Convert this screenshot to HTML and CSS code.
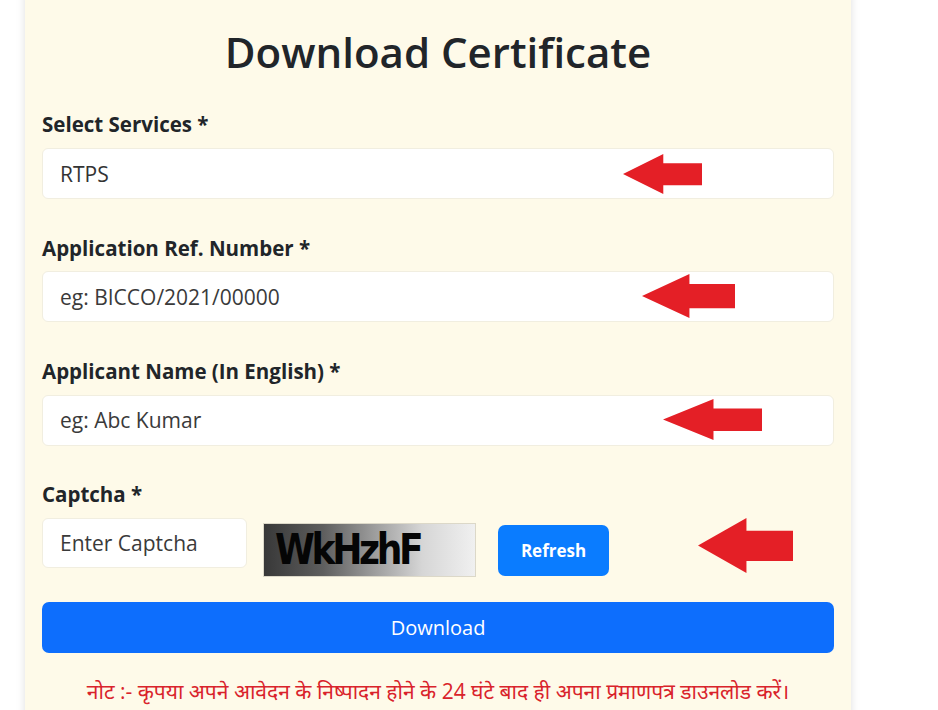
FILE: index.html
```html
<!DOCTYPE html>
<html lang="hi">
  <head>
    <meta charset="utf-8" />
    <meta name="viewport" content="width=device-width" />
    <title>Download Certificate</title>
    <link rel="stylesheet" href="styles.css">
  </head>

  <body>
    <section class="card">
      <h1 class="card-title">Download Certificate</h1>

      <form class="cert-form">
        <div class="field">
          <label for="service">Select Services *</label>
          <input id="service" class="form-control" type="text" value="RTPS" />
          <svg class="arrow arrow-1" viewBox="0 0 100 100" preserveAspectRatio="none"><polygon points="0,50 51,0 51,23 100,23 100,78 51,78 51,100" /></svg>
        </div>

        <div class="field">
          <label for="refno">Application Ref. Number *</label>
          <input id="refno" class="form-control" type="text" placeholder="eg: BICCO/2021/00000" />
          <svg class="arrow arrow-2" viewBox="0 0 100 100" preserveAspectRatio="none"><polygon points="0,50 51,0 51,23 100,23 100,78 51,78 51,100" /></svg>
        </div>

        <div class="field">
          <label for="appname">Applicant Name (In English) *</label>
          <input id="appname" class="form-control" type="text" placeholder="eg: Abc Kumar" />
          <svg class="arrow arrow-3" viewBox="0 0 100 100" preserveAspectRatio="none"><polygon points="0,50 51,0 51,23 100,23 100,78 51,78 51,100" /></svg>
        </div>

        <div class="field field-captcha">
          <label for="captcha">Captcha *</label>
          <div class="captcha-row">
            <input id="captcha" class="form-control captcha-input" type="text" placeholder="Enter Captcha" />
            <div class="captcha-img"><span>WkHzhF</span></div>
            <button type="button" class="btn btn-refresh">Refresh</button>
          </div>
          <svg class="arrow arrow-4" viewBox="0 0 100 100" preserveAspectRatio="none"><polygon points="0,50 51,0 51,23 100,23 100,78 51,78 51,100" /></svg>
        </div>

        <button type="submit" class="btn btn-download">Download</button>

        <p class="note">नोट :- कृपया अपने आवेदन के निष्पादन होने के 24 घंटे बाद ही अपना प्रमाणपत्र डाउनलोड करें।</p>
      </form>
    </section>
  </body>
</html>
```

FILE: styles.css
```css
html {
  box-sizing: border-box;
}

* {
  box-sizing: inherit;
}

body {
  margin: 0;
  background-color: #fff;
  color: #212529;
  font-family: "Open Sans", "Noto Sans", sans-serif;
}

.card {
  width: 826px;
  margin: -12px 0 0 25px;
  padding: 39px 17px 20px;
  background-color: #fefae9;
  border-radius: 8px;
  box-shadow: 0 0 10px rgba(0, 0, 0, 0.13);
}

.card-title {
  margin: 0 0 32px;
  font-size: 42px;
  font-weight: 600;
  line-height: 1.2;
  text-align: center;
}

.field {
  position: relative;
  margin-bottom: 33.5px;
}

.field label {
  display: block;
  margin-bottom: 8px;
  font-size: 20.5px;
  font-weight: 700;
  line-height: 1.5;
}

.form-control {
  display: block;
  width: 100%;
  height: 51px;
  padding: 0 17px;
  font: inherit;
  font-size: 21px;
  color: #333;
  background-color: #fff;
  border: 1px solid #f1eee0;
  border-radius: 6px;
  outline: none;
}

.form-control::placeholder {
  color: #3a3a3a;
}

/* captcha line: input, image, refresh */
.captcha-row {
  display: flex;
  align-items: flex-start;
  height: 59px;
}

.captcha-input {
  width: 205px;
  height: 50px;
}

.captcha-img {
  width: 213px;
  height: 54px;
  margin: 5px 0 0 16px;
  padding-left: 11px;
  overflow: hidden;
  border: 1px solid #dcd8c8;
  background: linear-gradient(to right, #383838, #5e5e5e 28%, #9c9c9c 52%, #d6d6d6 75%, #f0f0f0);
}

.captcha-img span {
  display: inline-block;
  font-family: "DejaVu Sans", sans-serif;
  font-size: 43px;
  font-weight: 700;
  line-height: 50px;
  letter-spacing: -4px;
  color: #050505;
  transform: scaleX(0.84);
  transform-origin: left center;
}

.btn {
  border: 0;
  border-radius: 7px;
  color: #fff;
  font-family: inherit;
  cursor: pointer;
}

.btn-refresh {
  width: 111px;
  height: 51px;
  margin: 7px 0 0 22px;
  background-color: #0a7cff;
  font-size: 17px;
  font-weight: 700;
}

.btn-download {
  display: block;
  width: 100%;
  height: 51px;
  margin-top: -8px;
  background-color: #0d6efd;
  font-size: 20px;
  font-weight: 400;
}

.note {
  margin: 24px 0 0;
  color: #d9232b;
  font-size: 21px;
  text-align: center;
}

/* red pointers over the inputs */
.arrow {
  position: absolute;
  fill: #e41f26;
}

.arrow-1 {
  left: 581px;
  top: 45px;
  width: 79px;
  height: 40px;
}

.arrow-2 {
  left: 600px;
  top: 41px;
  width: 93px;
  height: 44px;
}

.arrow-3 {
  left: 621px;
  top: 43px;
  width: 99px;
  height: 41px;
}

.arrow-4 {
  left: 656px;
  top: 39px;
  width: 95px;
  height: 55px;
}
```
